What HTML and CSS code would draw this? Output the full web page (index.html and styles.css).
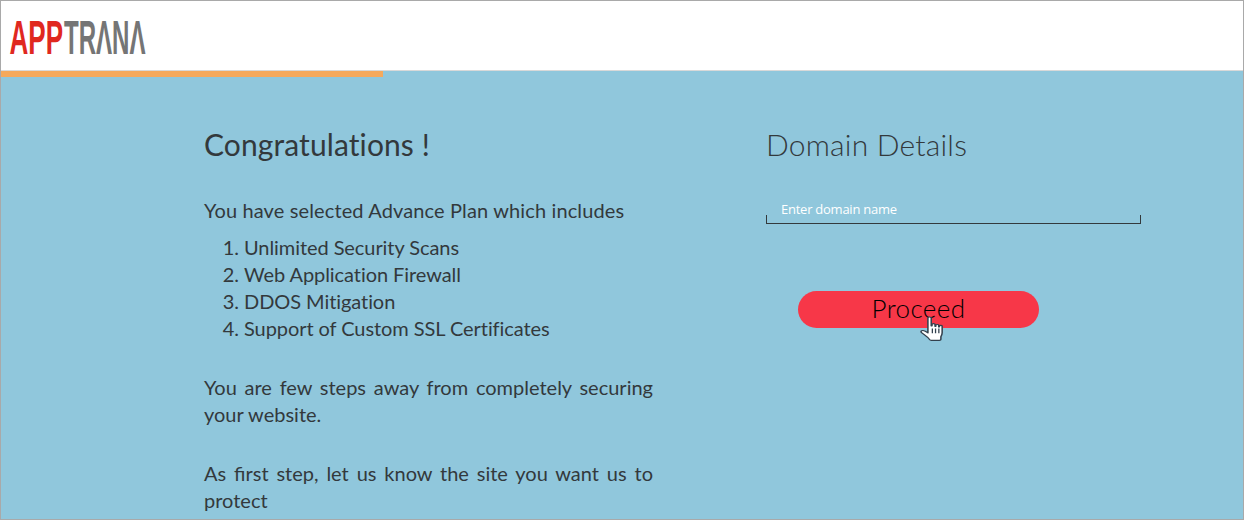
FILE: index.html
```html
<!DOCTYPE html>
<html lang="en">
<head>
<meta charset="utf-8">
<title>AppTrana</title>
<link rel="stylesheet" href="styles.css">
</head>
<body>
<div class="window">
  <header class="topbar">
    <svg class="logo" width="140" height="42" viewBox="0 0 140 42" role="img" aria-label="APPTRANA">
      <text class="logo-red" x="-0.500" y="38.500" textLength="53.500" lengthAdjust="spacingAndGlyphs">APP</text>
      <text class="logo-grey" x="54" y="38.500" textLength="81.500" lengthAdjust="spacingAndGlyphs">TRΛNΛ</text>
    </svg>
  </header>
  <div class="progress"><div class="progress-fill"></div></div>
  <main class="content">
    <section class="col-left">
      <h1 class="title">Congratulations !</h1>
      <p class="lead">You have selected Advance Plan which includes</p>
      <ol class="features">
        <li>Unlimited Security Scans</li>
        <li>Web Application Firewall</li>
        <li>DDOS Mitigation</li>
        <li>Support of Custom SSL Certificates</li>
      </ol>
      <p class="para">You are few steps away from completely securing your website.</p>
      <p class="para">As first step, let us know the site you want us to protect</p>
    </section>
    <section class="col-right">
      <h2 class="subtitle">Domain Details</h2>
      <div class="field"><span class="placeholder">Enter domain name</span></div>
      <div class="button-wrap">
        <button class="proceed" type="button">Proceed</button>
        <svg class="cursor" width="28" height="27" viewBox="0 0 22 28" preserveAspectRatio="none">
          <path d="M7 2.2c0-1.5 2.6-1.5 2.6 0v8l.6.1V8.9c0-1.3 2.4-1.3 2.4 0v1.8l.6.1V9.7c0-1.2 2.3-1.2 2.3 0v1.6l.5.1v-.7c0-1.2 2.2-1.2 2.2 0v6.7c0 1.8-.5 3-1 4.2v2.6c0 .7-.5 1.100-1.100 1.100H9.600c-.6 0-1-.3-1.200-.8-.6-1.500-2-3-3.800-4.700L2 17.300c-1-1-.1-2.500 1.200-2.200 1.200.3 2.600 1.300 3.800 2.300z" fill="#fff" stroke="#33404d" stroke-width="1.200" stroke-linejoin="round"/>
          <path d="M10.500 13v5M13 13v5M15.600 13v5" stroke="#33404d" stroke-width="1" fill="none"/>
        </svg>
      </div>
    </section>
  </main>
</div>
</body>
</html>
```
FILE: styles.css
```css
html, body {
  margin: 0;
  padding: 0;
  height: 100%;
}
body {
  overflow: hidden;
  font-family: "Lato", "Open Sans", sans-serif;
  color: #33393c;
}
.window {
  box-sizing: border-box;
  width: 1244px;
  height: 520px;
  border: 1px solid #a9a9a9;
  background: #90c7dc;
  overflow: hidden;
  display: flex;
  flex-direction: column;
}
.topbar {
  height: 70px;
  flex: none;
  background: #fff;
  border-bottom: 1px solid #d9d9d9;
  padding: 14px 0 0 9px;
  box-sizing: border-box;
}
.logo { display: block; overflow: visible; }
.logo text {
  font-family: "Liberation Sans", sans-serif;
  font-size: 49px;
  font-weight: 700;
}
.logo-red { fill: #e0281f; }
.logo-grey { fill: #757575; }
.progress {
  height: 6px;
  flex: none;
}
.progress-fill {
  width: 382px;
  height: 100%;
  background: #f5a95c;
}
.content {
  flex: 1;
  display: grid;
  grid-template-columns: 449px 375px;
  column-gap: 113px;
  padding: 0 0 0 203px;
}
.col-left, .col-right { min-width: 0; }
.title {
  margin: 50px 0 0;
  font-size: 30px;
  line-height: 34px;
  font-weight: 400;
  letter-spacing: 0.1px;
  color: #33393c;
}
.lead {
  margin: 36px 0 0;
  font-size: 20px;
  line-height: 27px;
  letter-spacing: 0.13px;
}
.features {
  margin: 10px 0 0;
  padding: 0 0 0 40px;
  font-size: 20px;
  line-height: 27px;
  letter-spacing: -0.07px;
}
.para {
  margin: 32px 0 0;
  font-size: 20px;
  line-height: 27px;
  text-align: justify;
}
.subtitle {
  margin: 50px 0 0;
  font-size: 30px;
  line-height: 34px;
  font-weight: 300;
  letter-spacing: 0.2px;
  color: #33393c;
}
.field {
  margin-top: 41px;
  height: 22px;
  box-sizing: border-box;
  border: 1px solid #33393c;
  border-top: 0;
  position: relative;
  padding-left: 14px;
}
.field::before {
  content: "";
  position: absolute;
  left: -1px;
  right: -1px;
  top: 0;
  height: 13px;
  background: #90c7dc;
}
.placeholder {
  position: relative;
  display: block;
  font-size: 13px;
  line-height: 15px;
  color: #fff;
  font-family: "Open Sans", sans-serif;
  letter-spacing: -0.25px;
}
.button-wrap {
  position: relative;
  margin: 67px 0 0 32px;
  width: 241px;
}
.proceed {
  display: block;
  width: 241px;
  height: 37px;
  border: 0;
  border-radius: 19px;
  background: #f73748;
  color: #000;
  font-family: "Lato", sans-serif;
  font-size: 26px;
  font-weight: 300;
  line-height: 35px;
  letter-spacing: 0.4px;
  padding: 0 0 2px;
}
.cursor {
  position: absolute;
  left: 121px;
  top: 25px;
}
```
